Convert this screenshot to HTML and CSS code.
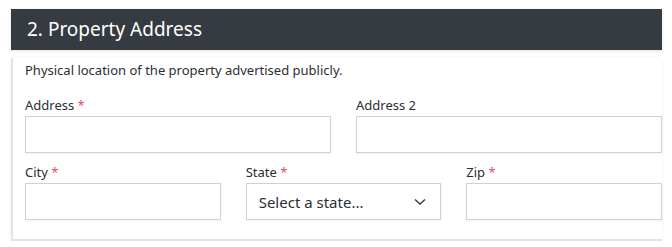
FILE: index.html
```html
<!DOCTYPE html>
<html lang="en">
<head>
<meta charset="utf-8">
<link rel="stylesheet" href="styles.css">
</head>
<body>
<section class="section">
  <h2 class="section-title">2. Property Address</h2>
  <div class="card">
    <p class="desc">Physical location of the property advertised publicly.</p>
    <div class="row row-2">
      <div class="field">
        <label class="label">Address <span class="req">*</span></label>
        <input class="input" type="text">
      </div>
      <div class="field">
        <label class="label">Address 2</label>
        <input class="input" type="text">
      </div>
    </div>
    <div class="row row-3">
      <div class="field">
        <label class="label">City <span class="req">*</span></label>
        <input class="input" type="text">
      </div>
      <div class="field">
        <label class="label">State <span class="req">*</span></label>
        <div class="select">
          <span class="select-text">Select a state...</span>
          <svg class="chev" width="12" height="8" viewBox="0 0 12 8"><path d="M1 1.5 L6 6 L11 1.5" fill="none" stroke="#3a3d42" stroke-width="1.5"/></svg>
        </div>
      </div>
      <div class="field">
        <label class="label">Zip <span class="req">*</span></label>
        <input class="input" type="text">
      </div>
    </div>
  </div>
</section>
</body>
</html>
```

FILE: styles.css
```css
* { box-sizing: border-box; }
html, body { margin: 0; padding: 0; background: #fff; }
body {
  font-family: "Noto Sans", "Open Sans", sans-serif;
  color: #2b2e33;
  padding: 9px 10px 0 11px;
}
.section { width: 651px; }
.section-title {
  margin: 0;
  height: 41px;
  background: #363a41;
  color: #fff;
  font-weight: 400;
  font-size: 19px;
  line-height: 41px;
  padding-left: 16px;
  box-shadow: 0 1px 3px rgba(0,0,0,0.12);
}
.card {
  margin-top: 8px;
  border-left: 2px solid #e2e5e9;
  border-bottom: 2px solid #dfe2e7;
  box-shadow: 0 0 4px rgba(0,0,0,0.06);
  padding: 2px 0 19px 12px;
}
.desc {
  margin: 0 0 15px;
  font-size: 13px;
  line-height: 20px;
}
.row { display: grid; gap: 25px; }
.row-2 { grid-template-columns: 1fr 1fr; margin-bottom: 9px; }
.row-3 { grid-template-columns: 1fr 1fr 1fr; }
.field { display: flex; flex-direction: column; }
.label {
  font-size: 13px;
  line-height: 20px;
  margin-bottom: 1px;
  color: #2b2e33;
}
.req { color: #e0505e; }
.input, .select {
  height: 37px;
  border: 1px solid #cdd2d9;
  background: #fff;
  box-shadow: 0 1px 2px rgba(0,0,0,0.06);
  margin: 0;
  width: 100%;
  font: inherit;
}
.select {
  display: flex;
  align-items: center;
  justify-content: space-between;
  padding: 0 14px 0 12px;
}
.select-text { font-size: 15px; color: #2b2e33; }
.chev { display: block; }
```
